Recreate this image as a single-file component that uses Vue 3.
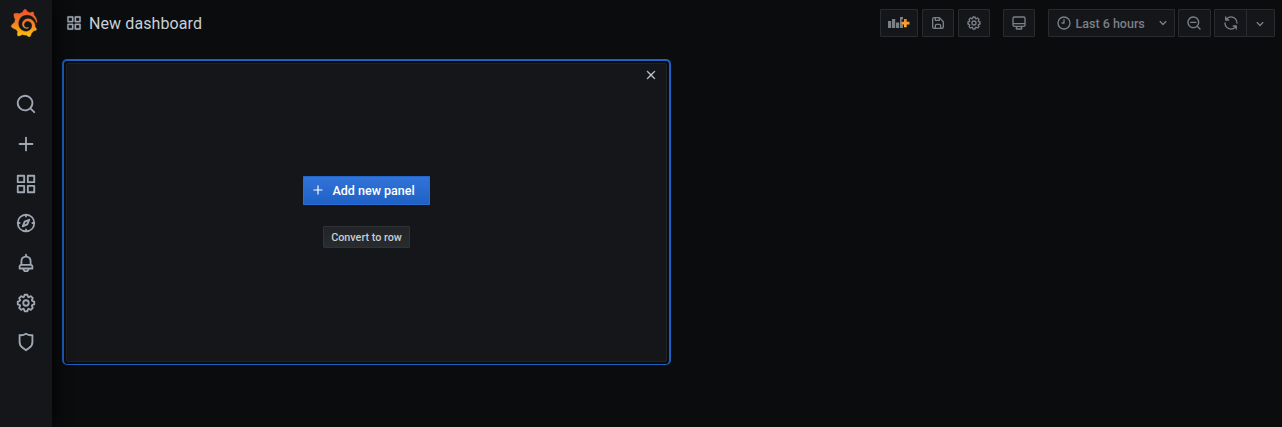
<script setup>
const icons = {
  search: 'M21.71,20.29,18,16.61A9,9,0,1,0,16.61,18l3.68,3.68a1,1,0,0,0,1.42,0A1,1,0,0,0,21.71,20.29ZM11,18a7,7,0,1,1,7-7A7,7,0,0,1,11,18Z',
  plus: 'M19,11H13V5a1,1,0,0,0-2,0v6H5a1,1,0,0,0,0,2h6v6a1,1,0,0,0,2,0V13h6a1,1,0,0,0,0-2Z',
  apps: 'M10,13H3a1,1,0,0,0-1,1v7a1,1,0,0,0,1,1h7a1,1,0,0,0,1-1V14A1,1,0,0,0,10,13ZM9,20H4V15H9ZM21,2H14a1,1,0,0,0-1,1v7a1,1,0,0,0,1,1h7a1,1,0,0,0,1-1V3A1,1,0,0,0,21,2ZM20,9H15V4h5Zm1,4H14a1,1,0,0,0-1,1v7a1,1,0,0,0,1,1h7a1,1,0,0,0,1-1V14A1,1,0,0,0,21,13Zm-1,7H15V15h5ZM10,2H3A1,1,0,0,0,2,3v7a1,1,0,0,0,1,1h7a1,1,0,0,0,1-1V3A1,1,0,0,0,10,2ZM9,9H4V4H9Z',
  compass: 'M12,2A10,10,0,1,0,22,12,10,10,0,0,0,12,2Zm1,17.93V19a1,1,0,0,0-2,0v.93A8,8,0,0,1,4.07,13H5a1,1,0,0,0,0-2H4.07A8,8,0,0,1,11,4.07V5a1,1,0,0,0,2,0V4.07A8,8,0,0,1,19.93,11H19a1,1,0,0,0,0,2h.93A8,8,0,0,1,13,19.93ZM15.14,7.55l-5,2.12a1,1,0,0,0-.52.52l-2.12,5a1,1,0,0,0,.21,1.1,1,1,0,0,0,.7.3.93.93,0,0,0,.4-.09l5-2.12a1,1,0,0,0,.52-.52l2.12-5a1,1,0,0,0-1.31-1.31Zm-2.49,5.1-2.28,1,1-2.28,2.28-1Z',
  bell: 'M18,13.18V10a6,6,0,0,0-5-5.91V3a1,1,0,0,0-2,0V4.09A6,6,0,0,0,6,10v3.18A3,3,0,0,0,4,16v2a1,1,0,0,0,1,1H8.14a4,4,0,0,0,7.72,0H19a1,1,0,0,0,1-1V16A3,3,0,0,0,18,13.18ZM8,10a4,4,0,0,1,8,0v3H8Zm4,10a2,2,0,0,1-1.72-1h3.44A2,2,0,0,1,12,20Zm6-3H6V16a1,1,0,0,1,1-1H17a1,1,0,0,1,1,1Z',
  cog: 'M21.32,9.55l-1.89-.63.89-1.78A1,1,0,0,0,20.13,6L18,3.87a1,1,0,0,0-1.15-.19l-1.78.89-.63-1.89A1,1,0,0,0,13.5,2h-3a1,1,0,0,0-.95.68L8.92,4.57,7.14,3.68A1,1,0,0,0,6,3.87L3.87,6a1,1,0,0,0-.19,1.15l.89,1.78-1.89.63A1,1,0,0,0,2,10.5v3a1,1,0,0,0,.68.95l1.89.63-.89,1.78A1,1,0,0,0,3.87,18L6,20.13a1,1,0,0,0,1.15.19l1.78-.89.63,1.89a1,1,0,0,0,.95.68h3a1,1,0,0,0,.95-.68l.63-1.89,1.78.89A1,1,0,0,0,18,20.13L20.13,18a1,1,0,0,0,.19-1.15l-.89-1.78,1.89-.63A1,1,0,0,0,22,13.5v-3A1,1,0,0,0,21.32,9.55ZM20,12.78l-1.2.4A2,2,0,0,0,17.64,16l.57,1.14-1.1,1.1L16,17.64a2,2,0,0,0-2.79,1.16l-.4,1.2H11.22l-.4-1.2A2,2,0,0,0,8,17.64l-1.14.57-1.1-1.1L6.36,16A2,2,0,0,0,5.2,13.18L4,12.78V11.22l1.2-.4A2,2,0,0,0,6.36,8L5.79,6.89l1.1-1.1L8,6.36A2,2,0,0,0,10.82,5.2l.4-1.2h1.56l.4,1.2A2,2,0,0,0,16,6.36l1.14-.57,1.1,1.1L17.64,8a2,2,0,0,0,1.16,2.79l1.2.4ZM12,8a4,4,0,1,0,4,4A4,4,0,0,0,12,8Zm0,6a2,2,0,1,1,2-2A2,2,0,0,1,12,14Z',
  shield: 'M19.63,3.65a1,1,0,0,0-.84-.2,8,8,0,0,1-6.22-1.27,1,1,0,0,0-1.14,0A8,8,0,0,1,5.21,3.45a1,1,0,0,0-.84.2A1,1,0,0,0,4,4.43v7.45a9,9,0,0,0,3.77,7.33l3.65,2.6a1,1,0,0,0,1.16,0l3.65-2.6A9,9,0,0,0,20,11.88V4.43A1,1,0,0,0,19.63,3.65ZM18,11.88a7,7,0,0,1-2.93,5.7L12,19.77,8.93,17.58A7,7,0,0,1,6,11.88V5.58a10,10,0,0,0,6-1.39,10,10,0,0,0,6,1.39Z',
  save: 'M20.71,9.29l-6-6a1,1,0,0,0-.32-.21A1.09,1.09,0,0,0,14,3H6A3,3,0,0,0,3,6V18a3,3,0,0,0,3,3H18a3,3,0,0,0,3-3V10A1,1,0,0,0,20.71,9.29ZM9,5h4V7H9Zm6,14H9V16a1,1,0,0,1,1-1h4a1,1,0,0,1,1,1Zm4-1a1,1,0,0,1-1,1H17V16a3,3,0,0,0-3-3H10a3,3,0,0,0-3,3v3H6a1,1,0,0,1-1-1V6A1,1,0,0,1,6,5H7V8A1,1,0,0,0,8,9h6a1,1,0,0,0,1-1V6.41l4,4Z',
  monitor: 'M19,2H5A3,3,0,0,0,2,5V15a3,3,0,0,0,3,3H7.64l-.58,1a2,2,0,0,0,0,2,2,2,0,0,0,1.75,1h6.46A2,2,0,0,0,17,21a2,2,0,0,0,0-2l-.59-1H19a3,3,0,0,0,3-3V5A3,3,0,0,0,19,2ZM8.77,20,10,18H14l1.2,2ZM20,15a1,1,0,0,1-1,1H5a1,1,0,0,1-1-1V14H20Zm0-3H4V5A1,1,0,0,1,5,4H19a1,1,0,0,1,1,1Z',
  clock: 'M12,2A10,10,0,1,0,22,12,10,10,0,0,0,12,2Zm0,18a8,8,0,1,1,8-8A8,8,0,0,1,12,20ZM12,6a1,1,0,0,0-1,1v4H9a1,1,0,0,0,0,2h3a1,1,0,0,0,1-1V7A1,1,0,0,0,12,6Z',
  down: 'M17,9.17a1,1,0,0,0-1.41,0L12,12.71,8.46,9.17a1,1,0,0,0-1.41,0,1,1,0,0,0,0,1.42l4.24,4.24a1,1,0,0,0,1.42,0L17,10.59A1,1,0,0,0,17,9.17Z',
  zoomOut: 'M21.71,20.29,18,16.61A9,9,0,1,0,16.61,18l3.68,3.68a1,1,0,0,0,1.42,0A1,1,0,0,0,21.71,20.29ZM11,18a7,7,0,1,1,7-7A7,7,0,0,1,11,18ZM15,10H7a1,1,0,0,0,0,2h8a1,1,0,0,0,0-2Z',
  sync: 'M19.91,15.51H15.38a1,1,0,0,0,0,2h2.4A8,8,0,0,1,4,12a1,1,0,0,0-2,0,10,10,0,0,0,16.88,7.23V21a1,1,0,0,0,2,0V16.5A1,1,0,0,0,19.91,15.51ZM12,2A10,10,0,0,0,5.12,4.77V3a1,1,0,0,0-2,0V7.5a1,1,0,0,0,1,1h4.5a1,1,0,0,0,0-2H6.22A8,8,0,0,1,20,12a1,1,0,0,0,2,0A10,10,0,0,0,12,2Z',
  times: 'M13.41,12l6.3-6.29a1,1,0,1,0-1.42-1.42L12,10.59,5.71,4.29A1,1,0,0,0,4.29,5.71L10.59,12l-6.3,6.29a1,1,0,1,0,1.42,1.42L12,13.41l6.29,6.3a1,1,0,0,0,1.42-1.42Z',
}
const logo = 'M23.02 10.59a8.578 8.578 0 0 0-.862-3.034 8.911 8.911 0 0 0-1.789-2.445c.337-1.342-.413-2.505-.413-2.505-1.292-.08-2.113.4-2.416.62-.052-.02-.102-.044-.154-.064-.22-.089-.446-.172-.677-.247-.231-.073-.47-.14-.711-.197a9.867 9.867 0 0 0-.875-.161C14.557.753 12.94 0 12.94 0c-1.804 1.145-2.147 2.744-2.147 2.744l-.018.093c-.098.029-.2.057-.298.088-.138.042-.275.094-.413.143-.138.055-.275.107-.41.166a8.869 8.869 0 0 0-1.557.87l-.063-.029c-2.497-.955-4.716.195-4.716.195-.203 2.658.996 4.33 1.235 4.636a11.608 11.608 0 0 0-.607 2.635C1.636 12.677.953 15.014.953 15.014c1.926 2.214 4.171 2.351 4.171 2.351.003-.002.006-.002.006-.005.285.509.615.994.986 1.446.156.19.32.371.488.548-.704 2.009.099 3.68.099 3.68 2.144.08 3.553-.937 3.849-1.173a9.784 9.784 0 0 0 3.164.501h.08l.055-.003.107-.002.103-.005.003.002c1.01 1.44 2.788 1.646 2.788 1.646 1.264-1.332 1.337-2.653 1.337-2.94v-.058c0-.02-.003-.039-.003-.06.265-.187.52-.387.758-.6a7.875 7.875 0 0 0 1.415-1.7c1.43.083 2.437-.885 2.437-.885-.236-1.49-1.085-2.216-1.264-2.354l-.018-.013-.016-.013a.217.217 0 0 1-.031-.02c.008-.092.016-.18.02-.27.011-.162.016-.323.016-.48v-.253l-.005-.098-.008-.135a1.891 1.891 0 0 0-.01-.13c-.003-.042-.008-.083-.013-.125l-.016-.124-.018-.122a6.215 6.215 0 0 0-2.032-3.73 6.015 6.015 0 0 0-3.222-1.46 6.292 6.292 0 0 0-.85-.048l-.107.002h-.063l-.044.003-.104.008a4.777 4.777 0 0 0-3.335 1.695c-.332.4-.592.84-.768 1.297a4.594 4.594 0 0 0-.312 1.817l.003.091c.005.055.007.11.013.164a3.615 3.615 0 0 0 .698 1.82 3.53 3.53 0 0 0 1.827 1.282c.33.098.66.14.971.137.039 0 .078 0 .114-.002l.063-.003c.02 0 .041-.003.062-.003.034-.002.065-.007.099-.01.007 0 .018-.003.028-.003l.031-.005.06-.008a1.18 1.18 0 0 0 .112-.02c.036-.008.072-.013.109-.024a2.634 2.634 0 0 0 .914-.415c.028-.02.056-.041.085-.065a.248.248 0 0 0 .039-.35.244.244 0 0 0-.309-.06l-.078.042c-.09.044-.184.083-.283.116a2.476 2.476 0 0 1-.475.096c-.028.003-.054.006-.083.006l-.083.002c-.026 0-.054 0-.08-.002l-.102-.006h-.012l-.024.006c-.016-.003-.031-.003-.044-.006-.031-.002-.06-.007-.091-.01a2.59 2.59 0 0 1-.724-.213 2.557 2.557 0 0 1-.667-.438 2.52 2.52 0 0 1-.805-1.475 2.306 2.306 0 0 1-.029-.444l.006-.122v-.023l.002-.031c.003-.021.003-.04.005-.06a3.163 3.163 0 0 1 1.352-2.29 3.12 3.12 0 0 1 .937-.43 2.946 2.946 0 0 1 .776-.101h.06l.07.002.045.003h.026l.07.005a4.041 4.041 0 0 1 1.635.49 3.94 3.94 0 0 1 1.602 1.662 3.77 3.77 0 0 1 .397 1.414l.005.076.003.075c.002.026.002.05.002.075 0 .024.003.052 0 .07v.065l-.002.073-.008.174a6.195 6.195 0 0 1-.08.639 5.1 5.1 0 0 1-.267.927 5.31 5.31 0 0 1-.624 1.13 5.052 5.052 0 0 1-3.237 2.014 4.82 4.82 0 0 1-.649.066l-.039.003h-.287a6.607 6.607 0 0 1-1.716-.265 6.776 6.776 0 0 1-3.4-2.274 6.75 6.75 0 0 1-.746-1.15 6.616 6.616 0 0 1-.714-2.596l-.005-.083-.002-.02v-.056l-.003-.073v-.096l-.003-.104v-.07l.003-.163c.008-.22.026-.45.054-.678a8.707 8.707 0 0 1 .28-1.355c.128-.444.286-.872.473-1.277a7.04 7.04 0 0 1 1.456-2.1 5.925 5.925 0 0 1 .953-.763c.169-.111.343-.213.524-.306.089-.05.182-.091.273-.135.047-.02.093-.042.138-.062a7.177 7.177 0 0 1 .714-.267l.145-.045c.049-.015.098-.026.148-.041.098-.029.197-.052.296-.076.049-.013.1-.02.15-.033l.15-.032.151-.028.076-.013.075-.01.153-.024c.057-.01.114-.013.171-.023l.169-.021c.036-.003.073-.008.106-.01l.073-.008.036-.003.042-.002c.057-.003.114-.008.171-.01l.086-.006h.023l.037-.003.145-.007a7.999 7.999 0 0 1 1.708.125 7.917 7.917 0 0 1 2.048.68 8.253 8.253 0 0 1 1.672 1.09l.09.077.089.078c.06.052.114.107.171.159.057.052.112.106.166.16.052.055.107.107.159.164a8.671 8.671 0 0 1 1.41 1.978c.012.026.028.052.04.078l.04.078.075.156c.023.051.05.1.07.153l.065.15a8.848 8.848 0 0 1 .45 1.34.19.19 0 0 0 .201.142.186.186 0 0 0 .172-.184c.01-.246.002-.532-.024-.856z'
const nav = ['search', 'plus', 'apps', 'compass', 'bell', 'cog', 'shield']
</script>

<template>
  <div class="app">
    <aside class="sidebar">
      <svg class="logo" viewBox="0 0 24 24">
        <defs>
          <linearGradient id="brand" x1="0" y1="1" x2="0" y2="0">
            <stop offset="0" stop-color="#fcc60e" />
            <stop offset="0.45" stop-color="#f58422" />
            <stop offset="1" stop-color="#f04e2b" />
          </linearGradient>
        </defs>
        <path :d="logo" fill="url(#brand)" stroke="url(#brand)" stroke-width="0.35" />
      </svg>
      <nav class="nav">
        <a v-for="name in nav" :key="name" class="nav-item">
          <svg class="icon i-nav" viewBox="0 0 24 24"><path :d="icons[name]" /></svg>
        </a>
      </nav>
    </aside>
    <main class="main">
      <header class="toolbar">
        <svg class="icon i-title" viewBox="0 0 24 24"><path :d="icons.apps" /></svg>
        <h1 class="title">New dashboard</h1>
        <button class="btn add">
          <svg class="i-add" viewBox="0 0 23 14">
            <defs>
              <linearGradient id="plus" x1="0" y1="0" x2="0" y2="1">
                <stop offset="0" stop-color="#f5803a" />
                <stop offset="1" stop-color="#fbb71c" />
              </linearGradient>
            </defs>
            <path class="bars" d="M0 5h3.200v7H0zM4 3h3.200v9H4zM8 6.500h3.200V12H8zM12 1h3v2.500h-1.500v5H15V12h-3z" />
            <path fill="url(#plus)" d="M16 3h2.700v2.700h2.800v2.700h-2.800v2.800H16V8.400h-2.700V5.700H16z" />
          </svg>
        </button>
        <button class="btn"><svg class="icon i-16" viewBox="0 0 24 24"><path :d="icons.save" /></svg></button>
        <button class="btn"><svg class="icon i-16" viewBox="0 0 24 24"><path :d="icons.cog" /></svg></button>
        <button class="btn view"><svg class="icon i-16" viewBox="0 0 24 24"><path :d="icons.monitor" /></svg></button>
        <button class="btn time">
          <svg class="icon i-16" viewBox="0 0 24 24"><path :d="icons.clock" /></svg>
          <span class="time-label">Last 6 hours</span>
          <svg class="icon i-16" viewBox="0 0 24 24"><path :d="icons.down" /></svg>
        </button>
        <button class="btn zoom"><svg class="icon i-16" viewBox="0 0 24 24"><path :d="icons.zoomOut" /></svg></button>
        <div class="refresh">
          <button class="btn left"><svg class="icon i-16" viewBox="0 0 24 24"><path :d="icons.sync" /></svg></button>
          <button class="btn right"><svg class="icon i-16" viewBox="0 0 24 24"><path :d="icons.down" /></svg></button>
        </div>
      </header>
      <section class="ring">
        <div class="panel">
          <div class="panel-head">
            <svg class="icon i-close" viewBox="0 0 24 24"><path :d="icons.times" /></svg>
          </div>
          <div class="actions">
            <button class="primary">
              <svg class="icon i-plus" viewBox="0 0 24 24"><path :d="icons.plus" /></svg>
              <span>Add new panel</span>
            </button>
            <button class="secondary">Convert to row</button>
          </div>
        </div>
      </section>
    </main>
  </div>
</template>

<style>
body {
  background: #0b0c0e;
  overflow: hidden;
}
</style>

<style scoped>
.app {
  display: flex;
  height: 427px;
  font-family: Roboto, "Liberation Sans", sans-serif;
  color: #c7d0d9;
}
.app * {
  box-sizing: border-box;
}
button {
  font-family: inherit;
  margin: 0;
}
.icon {
  display: block;
  flex: none;
  fill: currentColor;
}
.sidebar {
  width: 52px;
  flex: none;
  background: #15161a;
  box-shadow: 0 0 20px #000;
  z-index: 1;
}
.logo {
  display: block;
  width: 28px;
  height: 28px;
  margin: 9px 0 0 10px;
}
.nav {
  margin-top: 47.300px;
  color: #9fa7b3;
}
.nav-item {
  display: flex;
  height: 39.700px;
  padding-right: 0.500px;
  align-items: center;
  justify-content: center;
}
.i-nav {
  width: 22px;
  height: 22px;
}
.main {
  flex: 1;
  min-width: 0;
}
.toolbar {
  display: flex;
  align-items: center;
  height: 46px;
  padding: 0 7px 0 14px;
}
.i-title {
  width: 16px;
  height: 16px;
  color: #9fa7b3;
  stroke: currentColor;
  stroke-width: 0.5px;
}
.title {
  margin: 1px auto 0 7px;
  padding-top: 1px;
  font-size: 16px;
  font-weight: 400;
  letter-spacing: 0.1px;
  line-height: 24px;
}
.btn {
  display: flex;
  align-items: center;
  justify-content: center;
  width: 32px;
  height: 28px;
  padding: 0;
  margin-left: 4px;
  background: #141619;
  border: 1px solid #292b2f;
  border-radius: 1px;
  color: #7b8087;
}
.i-16 {
  width: 16px;
  height: 16px;
}
.add {
  width: 38px;
}
.i-add {
  width: 23px;
  height: 14px;
}
.bars {
  fill: #7b8087;
}
.view {
  margin-left: 13px;
}
.time {
  width: 127px;
  margin-left: 13px;
  justify-content: flex-start;
  padding-left: 6.500px;
}
.time-label {
  width: 79px;
  margin-left: 4px;
  text-align: left;
  white-space: nowrap;
  font-size: 12.500px;
  font-weight: 500;
}
.zoom {
  width: 33px;
  margin-left: 3px;
  padding-right: 1px;
}
.refresh {
  display: flex;
  margin-left: 3px;
}
.left {
  width: 33px;
  margin-left: 0;
  border-radius: 1px 0 0 1px;
}
.right {
  width: 29px;
  margin-left: -1px;
  padding: 2px 2px 0 0;
  border-radius: 0 1px 1px 0;
}
.ring {
  width: 609px;
  height: 306px;
  margin: 13px 0 0 10px;
  padding: 2px;
  border: 2px solid #1f60c4;
  border-bottom-width: 1px;
  border-radius: 5px;
}
.panel {
  height: 299px;
  background: #141619;
  border: 1px solid #202226;
  border-radius: 2px;
}
.panel-head {
  display: flex;
  justify-content: flex-end;
  height: 27px;
  padding: 5px 9px 0 0;
}
.i-close {
  width: 12px;
  height: 12px;
  stroke: currentColor;
  stroke-width: 0.8px;
}
.actions {
  display: flex;
  flex-direction: column;
  align-items: center;
  padding-top: 85px;
}
.primary {
  display: flex;
  align-items: center;
  width: 127px;
  height: 29px;
  padding: 0 0 0 7px;
  background: linear-gradient(180deg, #3274d9, #1f60c4) border-box;
  border: 1px solid #2b6dd6;
  border-top-color: #2566cb;
  border-radius: 1px;
  color: #fff;
  font-size: 12.500px;
  font-weight: 500;
}
.i-plus {
  width: 14px;
  height: 14px;
  margin-right: 7.500px;
  margin-bottom: 1px;
}
.secondary {
  width: 87px;
  height: 22px;
  margin-top: 21px;
  padding: 0;
  background: linear-gradient(180deg, #212327, #292c2f);
  border: 1px solid #2f3236;
  border-radius: 1px;
  color: #c9cdd2;
  font-size: 10.800px;
  font-weight: 500;
}
</style>
